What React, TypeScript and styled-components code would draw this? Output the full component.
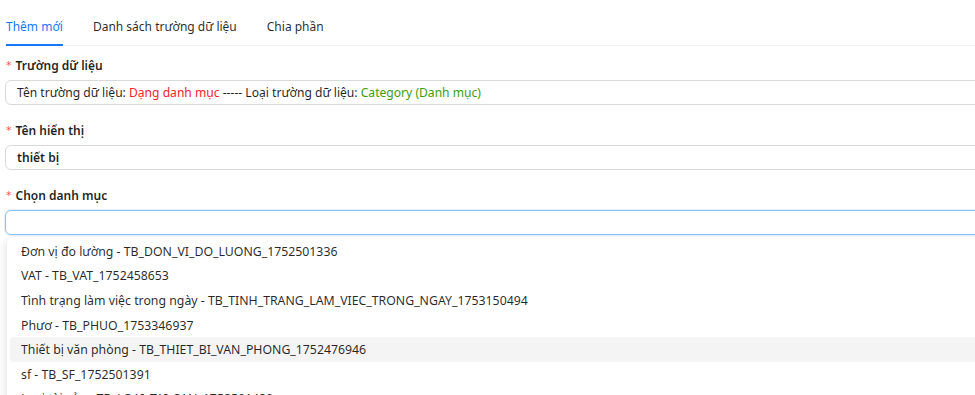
import React from 'react';
import styled, { createGlobalStyle } from 'styled-components';

const GlobalStyle = createGlobalStyle`
  html {
    overflow: hidden;
  }
  html, body {
    margin: 0;
    padding: 0;
    background: #ffffff;
  }
  body {
    font-family: 'Noto Sans', 'Open Sans', Arial, sans-serif;
    color: rgba(0, 0, 0, 0.88);
  }
`;

const Page = styled.div`
  width: 1100px;
  height: 395px;
  padding-left: 5px;
`;

const TabBar = styled.div`
  display: flex;
  align-items: flex-end;
  gap: 30px;
  height: 46px;
  border-bottom: 1px solid #f0f0f0;
  box-sizing: border-box;
  padding-left: 1px;
`;

const Tab = styled.div<{ active?: boolean }>`
  font-size: 12px;
  line-height: 20px;
  padding-bottom: 7px;
  margin-bottom: -1px;
  color: ${({ active }) => (active ? '#1677ff' : 'rgba(0, 0, 0, 0.85)')};
  border-bottom: 2px solid ${({ active }) => (active ? '#1677ff' : 'transparent')};
`;

const Form = styled.div`
  padding-top: 9px;
`;

const Field = styled.div`
  margin-bottom: 15px;
  position: relative;
`;

const Label = styled.div`
  display: flex;
  align-items: center;
  height: 20px;
  margin-bottom: 5px;
  font-size: 12px;
  font-weight: 600;
  color: rgba(0, 0, 0, 0.88);
  padding-left: 1px;

  &::before {
    content: '*';
    color: #ff4d4f;
    font-family: 'DejaVu Sans', sans-serif;
    font-weight: 400;
    font-size: 11px;
    margin-right: 4px;
  }
`;

const Input = styled.div<{ focused?: boolean; strong?: boolean }>`
  height: 25px;
  box-sizing: border-box;
  display: flex;
  align-items: center;
  padding: 0 11px;
  border-radius: 6px;
  border: 1px solid ${({ focused }) => (focused ? '#8cc4f7' : '#d9d9d9')};
  box-shadow: ${({ focused }) => (focused ? '0 0 0 1px rgba(22, 119, 255, 0.12)' : 'none')};
  font-size: 12.1px;
  font-weight: ${({ strong }) => (strong ? 600 : 400)};
  color: rgba(0, 0, 0, 0.88);
  white-space: pre;
`;

const Red = styled.span`
  color: #f5222d;
`;

const Green = styled.span`
  color: #389e0d;
`;

const Dropdown = styled.div`
  position: absolute;
  top: 52px;
  left: 2px;
  right: 0;
  background: #ffffff;
  border-radius: 6px;
  padding: 2px 3px;
  box-shadow: -2px 3px 10px rgba(0, 0, 0, 0.1), 0 0 2px rgba(0, 0, 0, 0.05);
`;

const Option = styled.div<{ active?: boolean }>`
  height: 24.6px;
  display: flex;
  align-items: center;
  padding: 0 11px;
  border-radius: 4px;
  font-size: 12.3px;
  color: rgba(0, 0, 0, 0.85);
  white-space: nowrap;
  background: ${({ active }) => (active ? '#f4f4f4' : 'transparent')};
`;

const options = [
  'Đơn vị đo lường - TB_DON_VI_DO_LUONG_1752501336',
  'VAT - TB_VAT_1752458653',
  'Tình trạng làm việc trong ngày - TB_TINH_TRANG_LAM_VIEC_TRONG_NGAY_1753150494',
  'Phươ - TB_PHUO_1753346937',
  'Thiết bị văn phòng - TB_THIET_BI_VAN_PHONG_1752476946',
  'sf - TB_SF_1752501391',
  'Loại tài sản - TB_LOAI_TAI_SAN_1752501420',
];

const App: React.FC = () => {
  return (
    <Page>
      <GlobalStyle />
      <TabBar>
        <Tab active>Thêm mới</Tab>
        <Tab>Danh sách trường dữ liệu</Tab>
        <Tab>Chia phần</Tab>
      </TabBar>
      <Form>
        <Field>
          <Label>Trường dữ liệu</Label>
          <Input>
            {'Tên trường dữ liệu: '}
            <Red>Dạng danh mục</Red>
            {' ----- Loại trường dữ liệu: '}
            <Green>Category (Danh mục)</Green>
          </Input>
        </Field>
        <Field>
          <Label>Tên hiển thị</Label>
          <Input strong>thiết bị</Input>
        </Field>
        <Field>
          <Label>Chọn danh mục</Label>
          <Input focused />
          <Dropdown>
            {options.map((o, i) => (
              <Option key={o} active={i === 4}>
                {o}
              </Option>
            ))}
          </Dropdown>
        </Field>
      </Form>
    </Page>
  );
};

export default App;
